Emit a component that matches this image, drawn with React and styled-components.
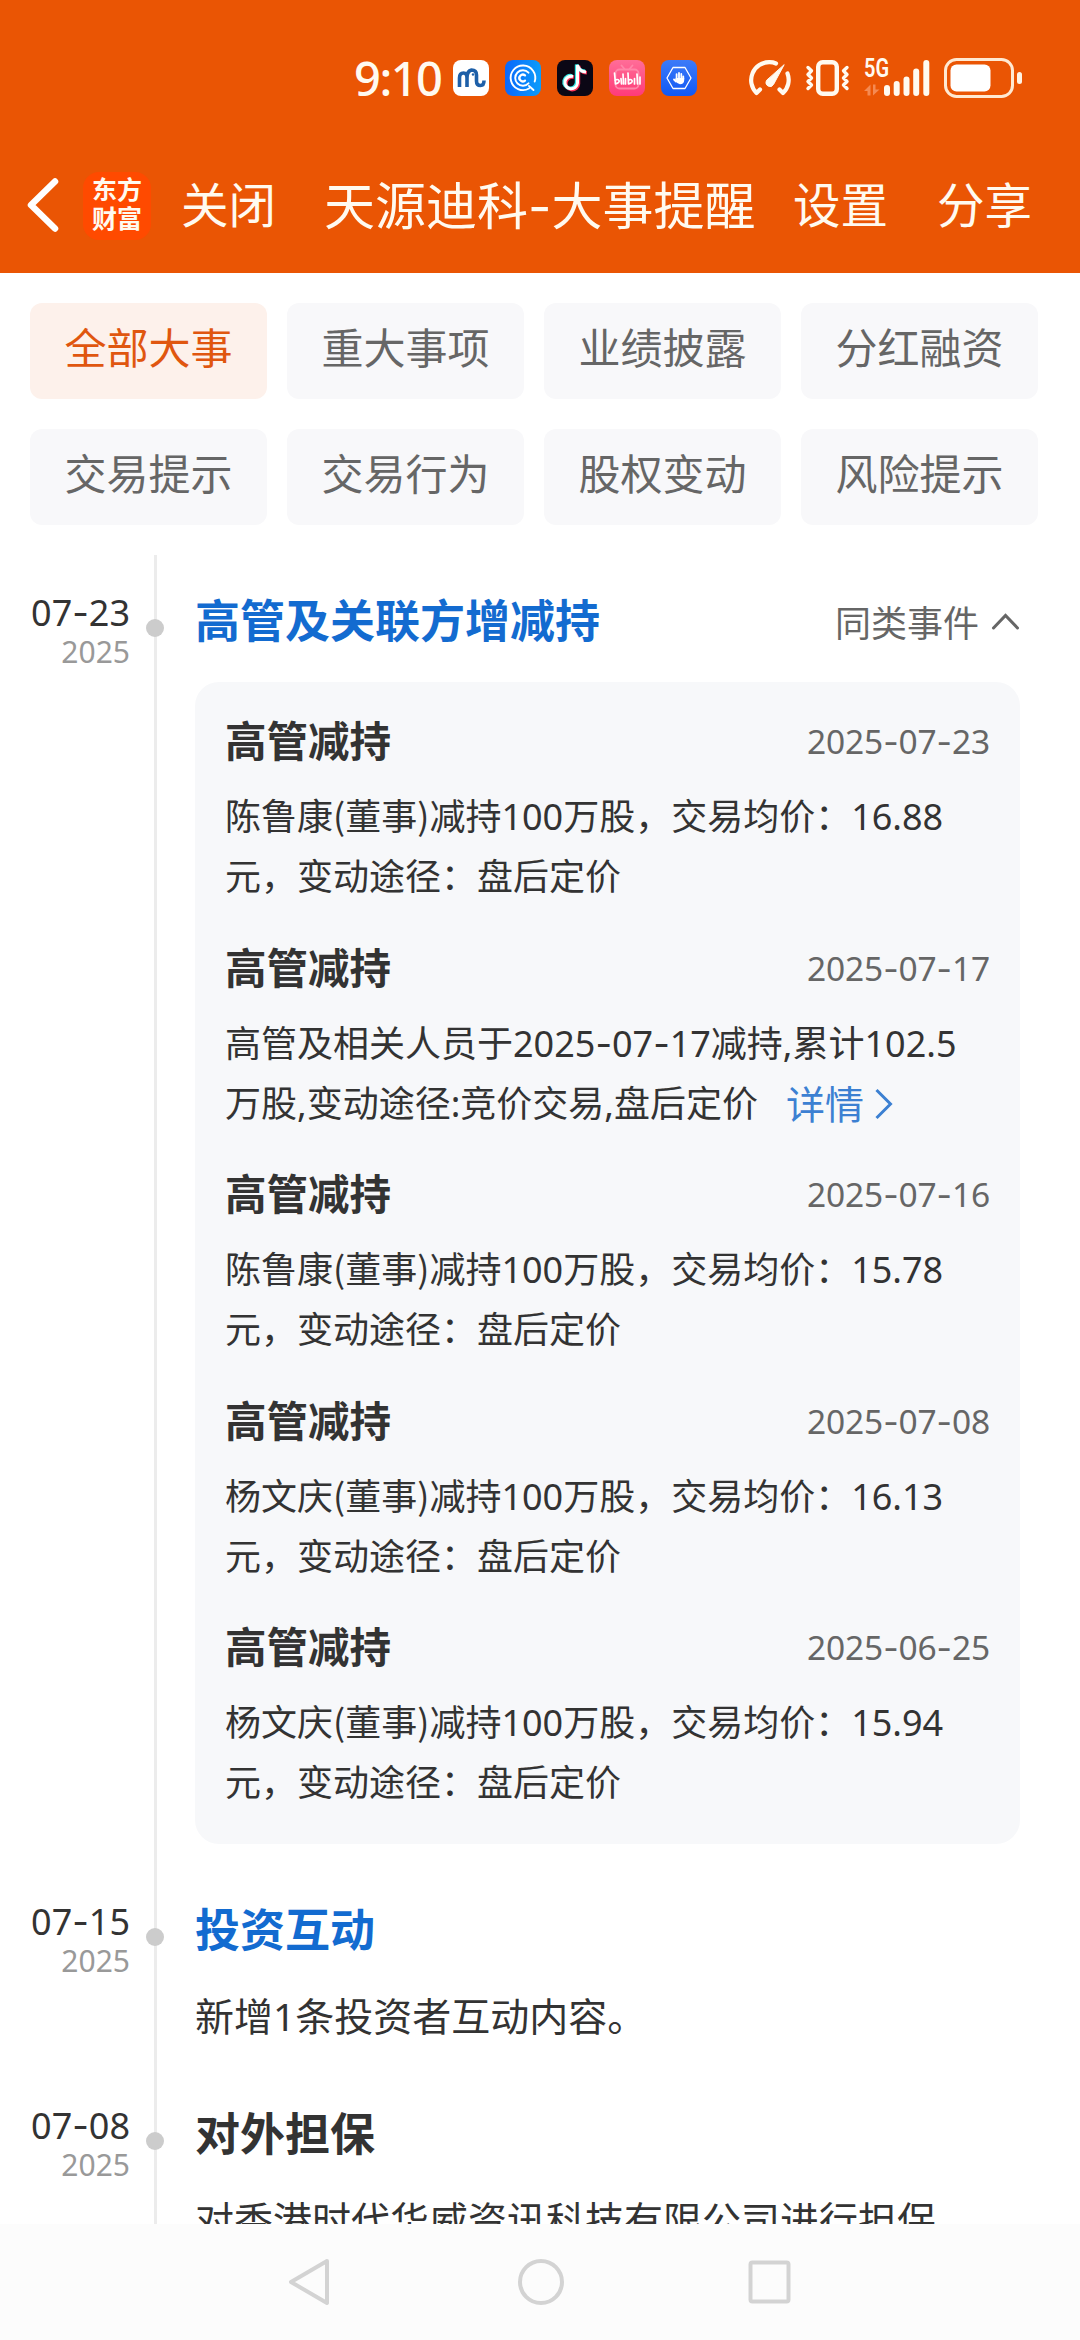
import React, { Fragment } from 'react';
import styled, { createGlobalStyle } from 'styled-components';

const GlobalStyle = createGlobalStyle`
    * {
        box-sizing:border-box;
        margin:0;
        padding:0;
    }
    body {
        font-family:"Noto Sans", "Noto Sans CJK SC", sans-serif;
        color:#333;
        background:#fff;
    }
    ul {
        list-style:none;
    }
    svg {
        display:block;
        flex:none;
    }
    button {
        font:inherit;
        color:inherit;
        border:0;
        background:none;
    }
`;

const Screen = styled.div`
    width:1080px;
    height:2340px;
    display:flex;
    flex-direction:column;
    overflow:hidden;
    background:#fff;
`;

/* status bar */
const StatusBar = styled.div`
    flex:none;
    height:138px;
    padding:36px 58px 18px 354px;
    display:flex;
    align-items:center;
    background:#ea5504;
    color:#fffaf0;
`;
const Clock = styled.span`
    width:99px;
    font-size:47px;
    line-height:60px;
    font-weight:500;
    letter-spacing:-1.5px;
`;
const AppIcons = styled.div`
    display:flex;
    gap:16px;
`;
const SystemIcons = styled.div`
    margin-left:auto;
    display:flex;
    align-items:center;
`;
const Gap = styled.span`
    flex:none;
    width:${props => props.$size}px;
`;
const Network = styled.div`
    position:relative;
    width:67px;
    height:36px;
`;
const NetworkLabel = styled.span`
    position:absolute;
    left:0;
    top:-1px;
    font-family:Roboto, sans-serif;
    font-size:25px;
    font-weight:600;
    line-height:20px;
    transform:scaleX(.8);
    transform-origin:0 0;
`;

/* title bar */
const TitleBar = styled.header`
    flex:none;
    height:135px;
    padding:0 0 2px 26px;
    display:flex;
    align-items:center;
    background:#ea5504;
    color:#fffaf0;
`;
const Logo = styled.div`
    width:68px;
    height:68px;
    margin:2px 30px 0 24px;
    padding-top:3px;
    border-radius:16px;
    background:#ff4a00;
    text-align:center;
    font-size:25px;
    font-weight:700;
    line-height:29px;
`;
const BarButton = styled.button`
    width:${props => props.$width}px;
    text-align:left;
    font-size:47.5px;
    line-height:60px;
    white-space:nowrap;
`;
const Title = styled.h1`
    width:469px;
    font-size:51px;
    font-weight:400;
    line-height:60px;
    white-space:nowrap;
`;

/* category filter */
const Filter = styled.ul`
    flex:none;
    display:grid;
    grid-template-columns:repeat(4, 237px);
    grid-auto-rows:96px;
    gap:30px 20px;
    padding:30px;
`;
const FilterItem = styled.li`
    padding-bottom:11px;
    display:flex;
    align-items:center;
    justify-content:center;
    border-radius:12px;
    font-size:42px;
    color:${props => props.$active ? '#e0560f' : '#666'};
    background:${props => props.$active ? '#fdf1eb' : '#f8f8fa'};
`;

/* timeline */
const Timeline = styled.ul`
    flex:1;
    min-height:0;
    overflow:hidden;
`;
const Event = styled.li`
    display:flex;
`;
const When = styled.div`
    width:130px;
    padding-top:37px;
    text-align:right;
    font-size:36px;
    line-height:42px;
`;
const Year = styled.p`
    font-size:30px;
    line-height:36px;
    color:#999;
`;
const Rail = styled.div`
    position:relative;
    width:3px;
    margin-left:24px;
    background:#ececec;
    &:before{
        content:'';
        position:absolute;
        left:-8px;
        top:64px;
        width:18px;
        height:18px;
        border-radius:50%;
        background:#ccc;
    }
`;
const Body = styled.div`
    margin-left:38px;
    width:825px;
    padding:36px 0 20px;
`;
const BodyHead = styled.div`
    display:flex;
    justify-content:space-between;
    align-items:center;
    height:60px;
`;
const EventTitle = styled.h2`
    font-size:45px;
    line-height:60px;
    color:${props => props.$link ? '#136bd0' : '#333'};
`;
const Toggle = styled.button`
    display:flex;
    align-items:center;
    gap:12px;
    font-size:36px;
    color:#666;
`;
const Summary = styled.p`
    margin-top:26px;
    padding-bottom:2px;
    font-size:39px;
    line-height:60px;
    white-space:nowrap;
`;
const Card = styled.ul`
    height:1162px;
    margin-top:31px;
    padding:29px 30px 0;
    border-radius:24px;
    background:#f7f8fa;
`;
const Record = styled.li`
    height:226.5px;
`;
const RecordHead = styled.div`
    display:flex;
    justify-content:space-between;
    align-items:center;
    height:60px;
`;
const RecordTitle = styled.h3`
    font-size:41.5px;
    line-height:60px;
`;
const RecordDate = styled.span`
    font-size:33.5px;
    line-height:60px;
    letter-spacing:-.1px;
    color:#666;
`;
const RecordText = styled.p`
    margin-top:16px;
    font-size:36px;
    line-height:60px;
    white-space:nowrap;
`;
const Detail = styled.a`
    display:inline-flex;
    align-items:center;
    gap:11px;
    height:60px;
    margin-left:28px;
    vertical-align:top;
    font-size:39px;
    color:#3c80d2;
`;
const Dash = styled.span`
    font-family:Inter, sans-serif;
    line-height:1;
`;
const Paren = styled.span`
    font-family:"Noto Sans CJK SC", sans-serif;
    line-height:1;
`;

/* system navigation */
const NavBar = styled.nav`
    flex:none;
    height:116px;
    padding:0 288px 0 287px;
    display:flex;
    align-items:center;
    justify-content:space-between;
    background:#fcfcfc;
`;

const filters = ['全部大事', '重大事项', '业绩披露', '分红融资', '交易提示', '交易行为', '股权变动', '风险提示'];

const records = [
    { date: '2025-07-23', lines: ['陈鲁康(董事)减持100万股，交易均价：16.88', '元，变动途径：盘后定价'] },
    { date: '2025-07-17', lines: ['高管及相关人员于2025-07-17减持,累计102.5', '万股,变动途径:竞价交易,盘后定价'], detail: true },
    { date: '2025-07-16', lines: ['陈鲁康(董事)减持100万股，交易均价：15.78', '元，变动途径：盘后定价'] },
    { date: '2025-07-08', lines: ['杨文庆(董事)减持100万股，交易均价：16.13', '元，变动途径：盘后定价'] },
    { date: '2025-06-25', lines: ['杨文庆(董事)减持100万股，交易均价：15.94', '元，变动途径：盘后定价'] },
];

// hyphens and parentheses are set in a wider face than the digits
const Mixed = ({ children }) => children.split(/([-()])/).map((part, i) => {
    if (part === '-') return <Dash key={i}>{part}</Dash>;
    if (part === '(' || part === ')') return <Paren key={i}>{part}</Paren>;
    return <Fragment key={i}>{part}</Fragment>;
});

const MIcon = () => (
    <svg width="36" height="36" viewBox="0 0 36 36">
        <rect width="36" height="36" rx="8" fill="#fff" />
        <path d="M6.500 27V18Q6.500 13 10.500 13Q14 13 14 18V27M14 18Q14 11 18.500 10Q23.500 10 23.500 15V21Q23.500 25.500 27.500 25.500Q31 25.500 31 20.500" fill="none" stroke="#1d5fa8" strokeWidth="3.600" />
        <circle cx="20" cy="14.500" r="1.200" fill="#1d5fa8" />
    </svg>
);
const SearchIcon = () => (
    <svg width="36" height="36" viewBox="0 0 36 36">
        <defs>
            <linearGradient id="search" x1="0" x2="1"><stop stopColor="#0a67fb" /><stop offset="1" stopColor="#0c9dfb" /></linearGradient>
        </defs>
        <rect width="36" height="36" rx="8" fill="url(#search)" />
        <g fill="none" stroke="#fff" strokeWidth="1.900" strokeLinecap="round">
            <path d="M24 28.500A12.300 12.300 0 1 1 29.700 21.500M24 26L28.500 30" />
            <path d="M23.500 23.300A7.700 7.700 0 1 1 23.500 12.700" />
            <path d="M20 20.600A3.400 3.400 0 1 1 20 15.400" strokeWidth="2.300" />
        </g>
    </svg>
);
const NoteIcon = () => (
    <svg width="36" height="36" viewBox="0 0 36 36">
        <rect width="36" height="36" rx="8" fill="#0b0715" />
        <g fill="none" strokeWidth="3.600">
            <path d="M16 16.500A6.300 6.300 0 1 0 20.500 23V5Q22 11.500 29 12" stroke="#fb3159" transform="translate(.9 .8)" />
            <path d="M16 16.500A6.300 6.300 0 1 0 20.500 23V5Q22 11.500 29 12" stroke="#35e5e3" transform="translate(-.9 -.6)" />
            <path d="M16 16.500A6.300 6.300 0 1 0 20.500 23V5Q22 11.500 29 12" stroke="#fff" strokeWidth="3" />
        </g>
    </svg>
);
const TvIcon = () => (
    <svg width="36" height="36" viewBox="0 0 36 36">
        <defs>
            <linearGradient id="tv" x1="0" x2="0" y1="0" y2="1"><stop stopColor="#ff6d98" /><stop offset="1" stopColor="#ff3b78" /></linearGradient>
        </defs>
        <rect width="36" height="36" rx="8" fill="url(#tv)" />
        <g fill="none" stroke="#ff86a9" strokeWidth="1.800" strokeLinecap="round">
            <rect x="6.500" y="9.500" width="23" height="19" rx="4" />
            <path d="M12.500 5.500L15.500 9M23.500 5.500L20.500 9" />
        </g>
        <g fill="none" stroke="#fff" strokeWidth="1.700" strokeLinecap="round" strokeLinejoin="round">
            <path d="M5.500 13L6.500 24Q11 22.500 10 20.500Q8.500 18.500 6 20.500M12 18.500L12.500 24M14 14L14.500 24M16.500 18.500V24M19 13L19.500 24Q24 22.500 23 20.500Q21.500 18.500 19.500 20.500M25.500 18.500V24M28 14L28.500 24M31 17V24" />
        </g>
    </svg>
);
const HandIcon = () => (
    <svg width="36" height="36" viewBox="0 0 36 36">
        <defs>
            <linearGradient id="hand" x1="0" x2="0" y1="0" y2="1"><stop stopColor="#3d7bf8" /><stop offset="1" stopColor="#1158f4" /></linearGradient>
        </defs>
        <rect width="36" height="36" rx="8" fill="url(#hand)" />
        <path d="M12 7.500H24L30 18L24 28.500H12L6 18Z" fill="none" stroke="#fff" strokeWidth="1.300" strokeLinejoin="round" />
        <g fill="none" stroke="#fff" strokeWidth="1.800" strokeLinecap="round">
            <path d="M15.600 19V14.200M18 18V12.900M20.300 18V14M22.300 19V16.500M15 21.500L13 19.500" />
        </g>
        <path d="M14.700 18H23.200V20.500Q23 24.200 19 24.200Q16.500 24.200 14 20.500Z" fill="#fff" />
    </svg>
);
const GaugeIcon = () => (
    <svg width="42" height="36" viewBox="0 0 42 36" fill="none" stroke="currentColor" strokeLinecap="round" strokeLinejoin="round">
        <path d="M27 3.500Q24 2.200 20.500 2.200A18 18 0 0 0 7.500 33L11 29.500M38.500 13.500A18 18 0 0 1 34 33L30.500 29.500" strokeWidth="4.200" />
        <path d="M35 5L24.500 24.500A4 4 0 0 1 17.500 20.500Z" fill="currentColor" strokeWidth="1" />
    </svg>
);
const VibrateIcon = () => (
    <svg width="45" height="36" viewBox="0 0 45 36" fill="none" stroke="currentColor" strokeLinecap="round" strokeLinejoin="round">
        <rect x="13.200" y="2.200" width="18.600" height="31.600" rx="4.500" strokeWidth="4.400" />
        <path d="M3 7.500L6.500 10.800L3 14.500L6.500 18L3 21.500L6.500 25L3 28.500M42 7.500L38.500 10.800L42 14.500L38.500 18L42 21.500L38.500 25L42 28.500" strokeWidth="3.400" />
    </svg>
);
const SignalBars = () => (
    <svg width="67" height="36" viewBox="0 0 67 36" fill="currentColor">
        <path d="M0 31L6.500 24.500V35.500H3.500V31ZM9 24.500H11.500V29.500H15.500L9 35.500Z" fill="#f58a52" />
        <rect x="20" y="25" width="6" height="11" rx="3" />
        <rect x="29.700" y="21" width="6" height="15" rx="3" />
        <rect x="39.500" y="16.500" width="6" height="19.500" rx="3" />
        <rect x="49.200" y="8.500" width="6" height="27.500" rx="3" />
        <rect x="59.300" y="0" width="6" height="36" rx="3" />
    </svg>
);
const BatteryIcon = () => (
    <svg width="78" height="40" viewBox="0 0 78 40" fill="none">
        <rect x="1.500" y="1.500" width="67" height="37" rx="11" stroke="#ffe9d2" strokeWidth="3" />
        <rect x="6.500" y="6.500" width="40" height="27" rx="6" fill="#fff" />
        <rect x="73" y="14" width="5" height="12" rx="2.500" fill="#fff3e4" />
    </svg>
);

const App = () => (
    <>
        <GlobalStyle />
        <Screen>
            <StatusBar>
                <Clock>9:10</Clock>
                <AppIcons>
                    <MIcon />
                    <SearchIcon />
                    <NoteIcon />
                    <TvIcon />
                    <HandIcon />
                </AppIcons>
                <SystemIcons>
                    <GaugeIcon />
                    <Gap $size={14} />
                    <VibrateIcon />
                    <Gap $size={14} />
                    <Network>
                        <NetworkLabel>5G</NetworkLabel>
                        <SignalBars />
                    </Network>
                    <Gap $size={13} />
                    <BatteryIcon />
                </SystemIcons>
            </StatusBar>

            <TitleBar>
                <svg width="33" height="56" viewBox="0 0 33 56" fill="none" stroke="#fff" strokeWidth="6.500" strokeLinecap="round" strokeLinejoin="round">
                    <path d="M29 4.500L5 28L29 51.500" />
                </svg>
                <Logo>东方<br />财富</Logo>
                <BarButton $width={143}>关闭</BarButton>
                <Title><Mixed>天源迪科-大事提醒</Mixed></Title>
                <BarButton $width={144}>设置</BarButton>
                <BarButton $width={100}>分享</BarButton>
            </TitleBar>

            <Filter>
                {filters.map((name, i) => (
                    <FilterItem key={name} $active={i === 0}>{name}</FilterItem>
                ))}
            </Filter>

            <Timeline>
                <Event>
                    <When><Mixed>07-23</Mixed><Year>2025</Year></When>
                    <Rail />
                    <Body>
                        <BodyHead>
                            <EventTitle $link>高管及关联方增减持</EventTitle>
                            <Toggle>
                                同类事件
                                <svg width="29" height="18" viewBox="0 0 29 18" fill="none" stroke="#666" strokeWidth="3" strokeLinecap="round">
                                    <path d="M2.500 16L14.500 3.500L26.500 16" />
                                </svg>
                            </Toggle>
                        </BodyHead>
                        <Card>
                            {records.map(record => (
                                <Record key={record.date}>
                                    <RecordHead>
                                        <RecordTitle>高管减持</RecordTitle>
                                        <RecordDate><Mixed>{record.date}</Mixed></RecordDate>
                                    </RecordHead>
                                    <RecordText>
                                        <Mixed>{record.lines[0]}</Mixed>
                                        <br />
                                        {record.lines[1]}
                                        {record.detail && (
                                            <Detail>
                                                详情
                                                <svg width="18" height="32" viewBox="0 0 18 32" fill="none" stroke="#3c80d2" strokeWidth="3">
                                                    <path d="M1.500 2L15.500 16L1.500 30" />
                                                </svg>
                                            </Detail>
                                        )}
                                    </RecordText>
                                </Record>
                            ))}
                        </Card>
                    </Body>
                </Event>
                <Event>
                    <When><Mixed>07-15</Mixed><Year>2025</Year></When>
                    <Rail />
                    <Body>
                        <EventTitle $link>投资互动</EventTitle>
                        <Summary>新增1条投资者互动内容。</Summary>
                    </Body>
                </Event>
                <Event>
                    <When><Mixed>07-08</Mixed><Year>2025</Year></When>
                    <Rail />
                    <Body>
                        <EventTitle>对外担保</EventTitle>
                        <Summary>对香港时代华威资讯科技有限公司进行担保</Summary>
                    </Body>
                </Event>
            </Timeline>

            <NavBar>
                <svg width="46" height="50" viewBox="0 0 46 50" fill="none" stroke="#d3d3d3" strokeWidth="4" strokeLinejoin="round">
                    <path d="M40 4L4 25L40 46Z" />
                </svg>
                <svg width="48" height="48" viewBox="0 0 48 48" fill="none" stroke="#d3d3d3" strokeWidth="4">
                    <circle cx="24" cy="24" r="21" />
                </svg>
                <svg width="44" height="44" viewBox="0 0 44 44" fill="none" stroke="#d3d3d3" strokeWidth="4">
                    <rect x="2.500" y="2.500" width="38" height="39" rx="2" />
                </svg>
            </NavBar>
        </Screen>
    </>
);

export default App;
